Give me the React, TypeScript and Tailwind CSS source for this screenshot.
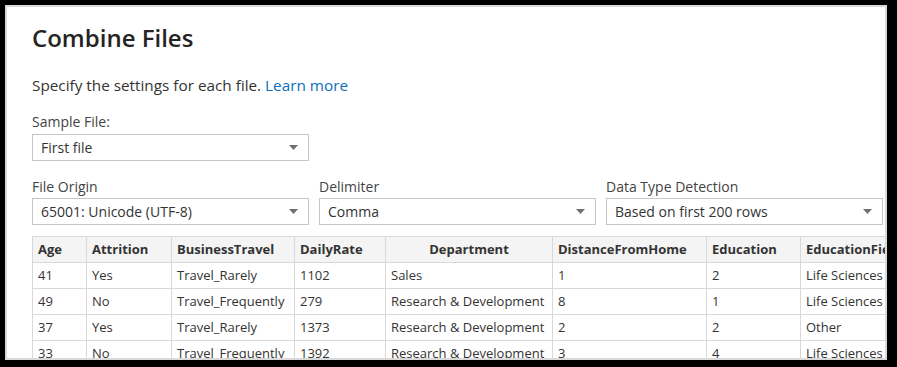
import React from 'react';

const font = { fontFamily: '"Open Sans", "Noto Sans", sans-serif' };

function Select({ value, width }: { value: string; width: string }) {
  return (
    <div
      className={`${width} h-[27px] border border-[#c6c6c6] bg-white flex items-center justify-between pl-[8px] pr-[10px] text-[14px] text-[#333]`}
    >
      <span>{value}</span>
      <svg width="9" height="5" viewBox="0 0 9 5">
        <path d="M0 0 L9 0 L4.5 5 Z" fill="#707070" />
      </svg>
    </div>
  );
}

const columns = [
  { name: 'Age', w: 'w-[54px]' },
  { name: 'Attrition', w: 'w-[85px]' },
  { name: 'BusinessTravel', w: 'w-[123px]' },
  { name: 'DailyRate', w: 'w-[91px]' },
  { name: 'Department', w: 'w-[167px]', center: true },
  { name: 'DistanceFromHome', w: 'w-[154px]' },
  { name: 'Education', w: 'w-[94px]' },
  { name: 'EducationField', w: 'w-[120px]' },
];

const rows = [
  ['41', 'Yes', 'Travel_Rarely', '1102', 'Sales', '1', '2', 'Life Sciences'],
  ['49', 'No', 'Travel_Frequently', '279', 'Research & Development', '8', '1', 'Life Sciences'],
  ['37', 'Yes', 'Travel_Rarely', '1373', 'Research & Development', '2', '2', 'Other'],
  ['33', 'No', 'Travel_Frequently', '1392', 'Research & Development', '3', '4', 'Life Sciences'],
];

export default function App() {
  return (
    <div className="w-[897px] h-[367px] bg-black pt-[5px] pl-[5px] pr-[10px] pb-[7px]" style={font}>
      <div className="w-full h-full bg-white border-2 border-[#d9d9d9] overflow-hidden pl-[25px] pt-[15px]">
        <h1 className="text-[24px] leading-[32px] font-semibold text-[#252423]">Combine Files</h1>

        <p className="mt-[21px] text-[15.3px] leading-[20px] text-[#333]">
          Specify the settings for each file. <span className="text-[#0a6ebd]">Learn more</span>
        </p>

        <div className="mt-[17px] text-[14px] leading-[20px] text-[#444]">Sample File:</div>
        <div className="mt-[2px]">
          <Select value="First file" width="w-[277px]" />
        </div>

        <div className="mt-[16px] flex gap-[10px]">
          <div>
            <div className="text-[14px] leading-[20px] text-[#444]">File Origin</div>
            <div className="mt-[1px]">
              <Select value="65001: Unicode (UTF-8)" width="w-[277px]" />
            </div>
          </div>
          <div>
            <div className="text-[14px] leading-[20px] text-[#444]">Delimiter</div>
            <div className="mt-[1px]">
              <Select value="Comma" width="w-[277px]" />
            </div>
          </div>
          <div>
            <div className="text-[14px] leading-[20px] text-[#444]">Data Type Detection</div>
            <div className="mt-[1px]">
              <Select value="Based on first 200 rows" width="w-[277px]" />
            </div>
          </div>
        </div>

        <table className="mt-[11px] table-fixed border-collapse w-[888px] min-w-[888px] text-[13px] text-[#333]">
          <thead>
            <tr className="bg-[#f4f4f4] h-[26px]">
              {columns.map((c) => (
                <th
                  key={c.name}
                  className={`${c.w} border border-[#d8d8d8] px-[5px] font-bold whitespace-nowrap overflow-hidden ${
                    c.center ? 'text-center' : 'text-left'
                  }`}
                >
                  {c.name}
                </th>
              ))}
            </tr>
          </thead>
          <tbody>
            {rows.map((r, i) => (
              <tr key={i} className="h-[26px]">
                {r.map((cell, j) => (
                  <td key={j} className="border border-[#d8d8d8] px-[5px] whitespace-nowrap overflow-hidden">
                    {cell}
                  </td>
                ))}
              </tr>
            ))}
          </tbody>
        </table>
      </div>
    </div>
  );
}
